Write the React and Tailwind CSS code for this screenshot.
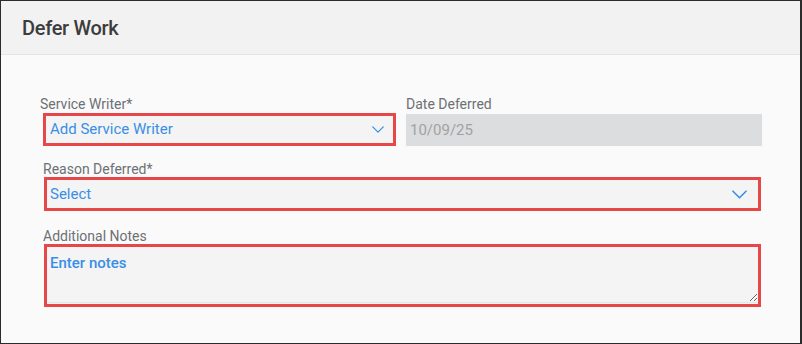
import React from 'react';

const Chevron = ({ className }) => (
  <svg className={className} viewBox="0 0 16 9" fill="none" stroke="currentColor" strokeWidth="1.7" strokeLinecap="round" strokeLinejoin="round">
    <path d="M1 1l7 7 7-7" />
  </svg>
);

const Label = ({ children, className = '' }) => (
  <div className={`text-[14px] leading-[18px] text-[#6d7075] ${className}`}>{children}</div>
);

const DeferWork = () => {
  return (
    <div
      className="w-[802px] h-[344px] border-l border-t border-b border-r-2 border-[#2b2b2b] bg-[#fafafa] flex flex-col"
      style={{ fontFamily: 'Roboto, "Liberation Sans", sans-serif' }}
    >
      {/* header */}
      <div className="h-[54px] shrink-0 bg-[#f2f2f2] border-b border-[#e4e4e4] flex items-center pl-[21px]">
        <h2 className="text-[20px] font-medium text-[#3c3c3c] tracking-[-0.3px]">Defer Work</h2>
      </div>

      {/* body */}
      <div className="flex flex-col pt-[40px] pl-[39px]">
        <div className="flex gap-[10px]">
          <div className="w-[356px]">
            <Label>Service Writer*</Label>
            <div className="ml-[3px] h-[33px] border-[3px] border-[#e8474a] bg-[#f4f4f4] flex items-center justify-between pl-[4px] pr-[9px]">
              <span className="text-[15px] text-[#3a8ee6]">Add Service Writer</span>
              <Chevron className="w-[12px] h-[7px] text-[#3a8ee6]" />
            </div>
          </div>
          <div className="w-[356px]">
            <Label>Date Deferred</Label>
            <div className="mt-[1px] h-[32px] bg-[#dcdddf] flex items-center pl-[4px]">
              <span className="text-[15px] text-[#a2a2a2]">10/09/25</span>
            </div>
          </div>
        </div>

        <div className="pl-[4px] w-[721px] mt-[14px]">
          <Label className="-ml-[1px]">Reason Deferred*</Label>
          <div className="mt-[-1px] h-[34px] border-[3px] border-[#e8474a] bg-[#f4f4f4] flex items-center justify-between pl-[3px] pr-[11px]">
            <span className="text-[15px] text-[#3a8ee6]">Select</span>
            <Chevron className="w-[15px] h-[9px] text-[#3a8ee6]" />
          </div>
        </div>

        <div className="pl-[4px] w-[721px] mt-[16px]">
          <Label className="-ml-[1px]">Additional Notes</Label>
          <div className="mt-[-1px] h-[63px] border-[3px] border-[#e8474a] bg-[#f4f4f4]">
            <textarea
              className="block w-full h-[56px] bg-[#f4f4f4] border-b border-[#e6e6e6] outline-none resize-y pl-[3px] pt-[6px] text-[15px] leading-[20px] font-medium text-[#3a8ee6] placeholder:text-[#3a8ee6] placeholder:opacity-100"
              placeholder="Enter notes"
            />
          </div>
        </div>
      </div>
    </div>
  );
};

export default function App() {
  return <DeferWork />;
}
